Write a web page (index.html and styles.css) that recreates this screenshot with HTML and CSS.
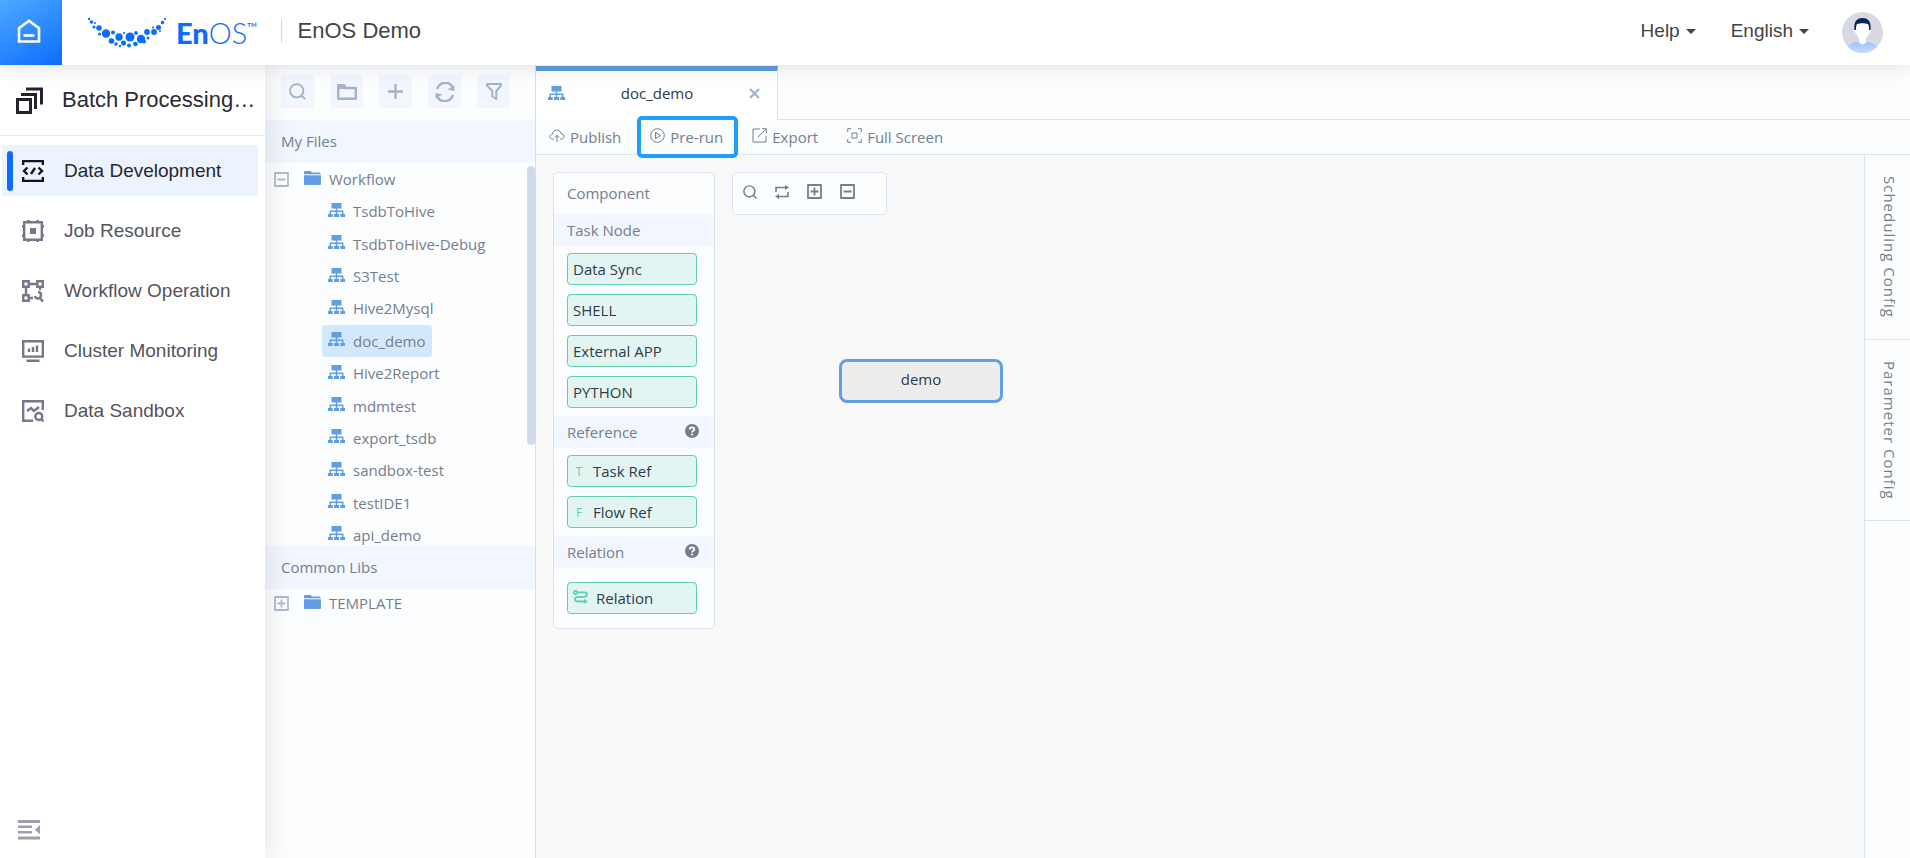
FILE: index.html
```
<!DOCTYPE html>
<html lang="en">
<head>
    <meta charset="UTF-8">
    <meta name="viewport" content="width=device-width, initial-scale=1.0">
    <title>EnOS Demo</title>
    <link rel="stylesheet" href="styles.css">
</head>
<body>
    <!-- shared icons -->
    <svg class="sprite" aria-hidden="true">
        <symbol id="flow" viewBox="0 0 17 14">
            <path fill="currentColor" d="M3.500 0h10v5.500h-10zM0 11h4.700v3H0zM6 11h5v3H6zM12.300 11H17v3h-4.700z"/>
            <path fill="none" stroke="currentColor" stroke-width="1.500" d="M8.500 5v6M2.300 11V8.200h12.400V11"/>
        </symbol>
        <symbol id="folder" viewBox="0 0 17 14">
            <path fill="currentColor" d="M0 1q0-1 1-1h5.500l1.500 1.500h7.500q1 0 1 1V3.300H0zM0 4.300h17V13q0 1-1 1H1q-1 0-1-1z"/>
        </symbol>
        <symbol id="search" viewBox="0 0 16 16">
            <g fill="none" stroke="currentColor" stroke-width="1.700"><circle cx="7.300" cy="7.300" r="6.300"/><path d="M11.700 11.700l3.600 3.600"/></g>
        </symbol>
        <symbol id="plusbox" viewBox="0 0 15 15">
            <path fill="none" stroke="currentColor" stroke-width="1.800" stroke-linejoin="round" d="M1 1h13v13H1zM3.500 7.500h8M7.500 3.500v8"/>
        </symbol>
        <symbol id="minusbox" viewBox="0 0 15 15">
            <path fill="none" stroke="currentColor" stroke-width="1.800" stroke-linejoin="round" d="M1 1h13v13H1zM3.500 7.500h8"/>
        </symbol>
        <symbol id="question" viewBox="0 0 14 14">
            <circle cx="7" cy="7" r="7" fill="currentColor"/>
            <path fill="none" stroke="#fff" stroke-width="1.700" d="M4.700 5.600c0-3 4.700-3 4.700-.3 0 1.500-2.300 1.500-2.300 3.200"/>
            <circle cx="7.100" cy="10.500" r="1" fill="#fff"/>
        </symbol>
    </svg>

    <header class="header">
        <a class="home" href="#" aria-label="Home">
            <svg width="24" height="24" viewBox="0 0 24 24" fill="none" stroke="#fff" stroke-width="2.600"><path d="M2 22.500V9.200L12 1.800l10 7.400v13.300z"/><path d="M6.500 16.500h11"/></svg>
        </a>
        <div class="logo">
            <svg width="78" height="31" viewBox="0 0 78 31" fill="#0b6cff">
                <circle cx="1" cy="2" r="1.200"/><circle cx="3.500" cy="5" r="1.800"/><circle cx="7" cy="6" r="1"/><circle cx="6" cy="10" r="1.500"/><circle cx="11" cy="11" r="2.800"/><circle cx="11.500" cy="17" r="1.500"/><circle cx="18" cy="16.500" r="4.200"/><circle cx="25" cy="15.500" r="2"/><circle cx="23.500" cy="24" r="2.800"/><circle cx="28" cy="27" r="1.800"/><circle cx="31" cy="20" r="3.700"/><circle cx="36" cy="16" r="1.100"/><circle cx="35.500" cy="26" r="2.500"/><circle cx="32" cy="29" r="1.200"/><circle cx="42" cy="20" r="4.500"/><circle cx="41" cy="28.500" r="2"/><circle cx="48" cy="16" r="1.900"/><circle cx="47.500" cy="27" r="2.300"/><circle cx="53" cy="22" r="4.200"/><circle cx="56" cy="24.500" r="2"/><circle cx="59" cy="15" r="2.900"/><circle cx="60" cy="21" r="1.500"/><circle cx="66" cy="15" r="2.900"/><circle cx="65" cy="10.500" r="1.100"/><circle cx="70.500" cy="10.500" r="2.500"/><circle cx="74.500" cy="5.500" r="1.800"/><circle cx="72" cy="14" r="1"/><circle cx="77" cy="2" r="1.100"/>
            </svg>
            <span class="logo-text"><b>En</b>OS<sup>TM</sup></span>
        </div>
        <h1 class="product">EnOS Demo</h1>
        <nav class="user-nav">
            <button class="menu-button" type="button">Help</button>
            <button class="menu-button" type="button">English</button>
            <a class="avatar" href="#" aria-label="Account">
                <svg width="41" height="41" viewBox="0 0 41 41">
                    <defs>
                        <clipPath id="round"><circle cx="20.500" cy="20.500" r="20.500"/></clipPath>
                        <linearGradient id="shirt" x2="0" y2="1"><stop stop-color="#9fc3ff"/><stop offset="1" stop-color="#c5dcff"/></linearGradient>
                    </defs>
                    <g clip-path="url(#round)">
                        <path fill="#d8d9e3" d="M0 0h41v41H0z"/>
                        <path fill="url(#shirt)" d="M4 41c0-7 5-11 12-11h9c7 0 12 4 12 11z"/>
                        <path fill="#fff" d="M13 11h15v6c2 0 1 4-1 4-1 3-2 4-3 5v4q-3.500 5-7 0v-4c-1-1-2-2-3-5-2 0-3-4-1-4z"/>
                        <path fill="#06235c" d="M12.500 18c-1-8 2-12 8-12s9 4 8 12h-1.500c0-3 0-4-1-6-3-1-8-1-11 0-1 2-1 3-1 6z"/>
                    </g>
                </svg>
            </a>
        </nav>
    </header>

    <div class="page">
        <aside class="sidebar">
            <h2 class="sidebar-title">
                <svg width="27" height="27" viewBox="0 0 27 27" fill="none" stroke="#23222f" stroke-width="3"><path d="M1.500 12.500h13v13h-13zM5 7.500h14.500V22M10 2h15.500v15.500"/></svg>
                Batch Processing…
            </h2>
            <nav class="side-nav">
                <a class="side-link active" href="#">
                    <svg width="22" height="22" viewBox="0 0 22 22" fill="none" stroke="currentColor" stroke-width="2.400"><path d="M1.100 5V1.100h19.800V5M1.100 17v3.900h19.800V17M5.500 7.500L2 11l3.500 3.500M16.500 7.500L20 11l-3.500 3.500M13 8l-4 6"/></svg>
                    Data Development
                </a>
                <a class="side-link" href="#">
                    <svg width="22" height="22" viewBox="0 0 22 22" fill="none" stroke="currentColor" stroke-width="2.400"><path d="M2.200 2.200h17.600v17.600H2.200zM6.500 0v2M15.500 0v2M6.500 20v2M15.500 20v2M0 6.500h2M0 15.500h2M20 6.500h2M20 15.500h2"/><path fill="currentColor" stroke="none" d="M8 8h6v6H8z"/></svg>
                    Job Resource
                </a>
                <a class="side-link" href="#">
                    <svg width="22" height="22" viewBox="0 0 22 22" fill="none" stroke="currentColor" stroke-width="2.400"><path d="M1.200 1.200h5.500v5.500H1.200zM15.300 1.200h5.500v5.500h-5.500zM1.200 15.300h5.500v5.500H1.200zM7 4h8M4 7v8M18 7v3M7 18h4"/><path d="M13 16c1 4 6 3 6-1 0-2-1-3-3-3M18 18l3 3.500"/></svg>
                    Workflow Operation
                </a>
                <a class="side-link" href="#">
                    <svg width="22" height="22" viewBox="0 0 22 22" fill="none" stroke="currentColor" stroke-width="2.400"><path d="M1.200 1.200h19.600v15.400H1.200zM4.500 20.700h13M7 12V8.500M11 12V7M15 12V5.500"/></svg>
                    Cluster Monitoring
                </a>
                <a class="side-link" href="#">
                    <svg width="22" height="22" viewBox="0 0 22 22" fill="none" stroke="currentColor" stroke-width="2.400"><path d="M20.800 10V1.200H1.200v19.600H11M5 11l4-3 3 3 5-4"/><circle cx="16.800" cy="16.500" r="3.500"/><path d="M19 19l2.500 2.500"/></svg>
                    Data Sandbox
                </a>
            </nav>
            <button class="collapse" type="button" aria-label="Collapse menu">
                <svg width="22" height="20" viewBox="0 0 22 20" fill="#a09eae"><path d="M0 0h22v3H0zM0 5.500h14v2.500H0zM0 11h14v2.500H0zM0 16.500h22v3H0zM22 5v9.500l-5-4.700z"/></svg>
            </button>
        </aside>

        <section class="files">
            <div class="file-tools">
                <button type="button" aria-label="Search"><svg width="17" height="17"><use href="#search"/></svg></button>
                <button type="button" aria-label="New folder"><svg width="20" height="16" viewBox="0 0 20 16"><path fill="none" stroke="currentColor" stroke-width="2.400" stroke-linejoin="round" d="M1.200 14.800V1.200H7l2 2.800h9.800v10.800z"/><path fill="currentColor" d="M1 1h6l2 4H1z"/></svg></button>
                <button type="button" aria-label="Add"><svg width="15" height="15" viewBox="0 0 15 15"><path stroke="currentColor" stroke-width="2.400" d="M7.500 0v15M0 7.500h15"/></svg></button>
                <button type="button" aria-label="Refresh"><svg width="20" height="20" viewBox="0 0 20 20"><path fill="none" stroke="currentColor" stroke-width="2.400" d="M2 7c3-8 13-8 16-1M18 13c-3 8-13 8-16 1"/><path fill="currentColor" d="M19.500 3.500V9l-7-1.500zM.5 16.500V11l7 1.500z"/></svg></button>
                <button type="button" aria-label="Filter"><svg width="16" height="17" viewBox="0 0 16 17"><path fill="none" stroke="currentColor" stroke-width="2" stroke-linejoin="round" d="M1 1h14v1.500L10.300 8v8l-4-2.500V8L1 2.500z"/></svg></button>
            </div>
            <h3 class="files-heading">My Files</h3>
            <div class="tree-wrap">
                <ul class="tree">
                    <li class="branch"><svg class="toggle" width="15" height="15"><use href="#minusbox"/></svg><a href="#"><svg width="17" height="14"><use href="#folder"/></svg>Workflow</a></li>
                    <li><a href="#"><svg width="17" height="14"><use href="#flow"/></svg>TsdbToHive</a></li>
                    <li><a href="#"><svg width="17" height="14"><use href="#flow"/></svg>TsdbToHive-Debug</a></li>
                    <li><a href="#"><svg width="17" height="14"><use href="#flow"/></svg>S3Test</a></li>
                    <li><a href="#"><svg width="17" height="14"><use href="#flow"/></svg>Hive2Mysql</a></li>
                    <li><a class="selected" href="#"><svg width="17" height="14"><use href="#flow"/></svg>doc_demo</a></li>
                    <li><a href="#"><svg width="17" height="14"><use href="#flow"/></svg>Hive2Report</a></li>
                    <li><a href="#"><svg width="17" height="14"><use href="#flow"/></svg>mdmtest</a></li>
                    <li><a href="#"><svg width="17" height="14"><use href="#flow"/></svg>export_tsdb</a></li>
                    <li><a href="#"><svg width="17" height="14"><use href="#flow"/></svg>sandbox-test</a></li>
                    <li><a href="#"><svg width="17" height="14"><use href="#flow"/></svg>testIDE1</a></li>
                    <li><a href="#"><svg width="17" height="14"><use href="#flow"/></svg>api_demo</a></li>
                </ul>
                <div class="scrollbar"><div class="thumb"></div></div>
            </div>
            <h3 class="files-heading">Common Libs</h3>
            <ul class="libs">
                <li class="branch"><svg class="toggle" width="15" height="15"><use href="#plusbox"/></svg><a href="#"><svg width="17" height="14"><use href="#folder"/></svg>TEMPLATE</a></li>
            </ul>
        </section>

        <main class="workspace">
            <div class="tabs">
                <div class="tab">
                    <svg width="17" height="14"><use href="#flow"/></svg>
                    <span class="tab-name">doc_demo</span>
                    <button class="tab-close" type="button" aria-label="Close tab"><svg width="11" height="11" viewBox="0 0 11 11"><path stroke="currentColor" stroke-width="2.200" d="M1 1l9 9M10 1l-9 9"/></svg></button>
                </div>
            </div>
            <div class="toolbar">
                <button type="button"><svg width="16" height="14" viewBox="0 0 16 14"><path d="M5 10H3.500C0 10 0 5.500 3.500 5 4 0 11 0 12 4.500c4 0 4 5.500.5 5.500H11M8 13V6.500M5.800 8.500L8 6.300l2.200 2.200"/></svg>Publish</button>
                <button class="highlight" type="button"><svg width="15" height="15" viewBox="0 0 15 15"><circle cx="7.500" cy="7.500" r="6.800"/><path d="M5.500 4.300v6.400l5-3.200z"/></svg>Pre-run</button>
                <button type="button"><svg width="15" height="15" viewBox="0 0 15 15"><path d="M8 1H1v13h13V8M10 .7h4.300V5M14 1L6 9"/></svg>Export</button>
                <button type="button"><svg width="15" height="15" viewBox="0 0 15 15"><path d="M4 .7H.7V4M11 .7h3.300V4M4 14.300H.7V11M11 14.300h3.300V11M5 5h5v5H5z"/></svg>Full Screen</button>
            </div>
            <div class="editor">
                <div class="canvas">
                    <div class="components">
                        <h4 class="components-title">Component</h4>
                        <h5>Task Node</h5>
                        <div class="group">
                            <button type="button">Data Sync</button>
                            <button type="button">SHELL</button>
                            <button type="button">External APP</button>
                            <button type="button">PYTHON</button>
                        </div>
                        <h5>Reference <svg width="14" height="14"><use href="#question"/></svg></h5>
                        <div class="group">
                            <button type="button"><span class="letter">T</span>Task Ref</button>
                            <button type="button"><span class="letter">F</span>Flow Ref</button>
                        </div>
                        <h5>Relation <svg width="14" height="14"><use href="#question"/></svg></h5>
                        <div class="group relation">
                            <button type="button"><svg width="15" height="14" viewBox="0 0 15 14" fill="none" stroke="currentColor" stroke-width="1.800"><circle cx="2.500" cy="2.500" r="1.700"/><path d="M4.500 2.300H11c4 0 4 4.500 0 4.500H5c-4 0-4 4.700 0 4.700h7"/><path fill="currentColor" stroke="none" d="M11 9l4 2.600-4 2.400z"/></svg>Relation</button>
                        </div>
                    </div>
                    <div class="canvas-tools">
                        <button type="button" aria-label="Find node"><svg width="14" height="14"><use href="#search"/></svg></button>
                        <button type="button" aria-label="Refresh"><svg width="14" height="14" viewBox="0 0 14 14"><path fill="none" stroke="currentColor" stroke-width="1.600" d="M1 7V2.500h10M13 7v4.500H3"/><path fill="currentColor" d="M10 0l4 2.500L10 5zM4 9l-4 2.500L4 14z"/></svg></button>
                        <button type="button" aria-label="Zoom in"><svg width="15" height="15"><use href="#plusbox"/></svg></button>
                        <button type="button" aria-label="Zoom out"><svg width="15" height="15"><use href="#minusbox"/></svg></button>
                    </div>
                    <div class="node">demo</div>
                </div>
                <div class="config">
                    <button type="button">Scheduling Config</button>
                    <button type="button">Parameter Config</button>
                </div>
            </div>
        </main>
    </div>
</body>
</html>
```
FILE: styles.css
```
* {
    box-sizing: border-box;
}

body {
    margin: 0;
    height: 100vh;
    display: flex;
    flex-direction: column;
    overflow: hidden;
    font-family: "Open Sans", "Noto Sans", sans-serif;
    font-size: 15px;
    color: #747f8d;
    background-color: #fcfdff;
}

h1, h2, h3, h4, h5, ul {
    margin: 0;
    padding: 0;
    font-weight: normal;
    list-style: none;
}

a {
    color: inherit;
    text-decoration: none;
}

button {
    margin: 0;
    padding: 0;
    border: none;
    background: none;
    font: inherit;
    color: inherit;
    cursor: pointer;
}

svg {
    display: block;
    flex-shrink: 0;
}

.sprite {
    position: absolute;
    width: 0;
    height: 0;
}

/* header */
.header {
    position: relative;
    z-index: 3;
    flex-shrink: 0;
    display: flex;
    align-items: center;
    height: 65px;
    background-color: #fff;
    box-shadow: 0 0 20px rgba(0, 0, 0, 0.14);
    font-family: "Liberation Sans", Arial, sans-serif;
    color: #444;
}

.home {
    width: 62px;
    height: 65px;
    display: flex;
    align-items: center;
    justify-content: center;
    padding-right: 5px;
    padding-bottom: 3px;
    background: linear-gradient(150deg, #4fa9ff, #0b6cff);
}

.logo {
    display: flex;
    align-items: center;
    gap: 10px;
    margin-left: 26px;
    color: #0b6cff;
}

.logo-text {
    display: flex;
    font-family: Lato, sans-serif;
    font-size: 29px;
    font-weight: 300;
    line-height: 36px;
}

.logo-text b {
    font-weight: 900;
}

.logo-text sup {
    font-size: 6px;
    font-weight: 700;
    line-height: 20px;
}

.product {
    margin-left: 24px;
    padding-left: 16px;
    border-left: 1px solid #d8d8d8;
    font-size: 22px;
    line-height: 24px;
}

.product, .menu-button {
    margin-bottom: 3px;
}

.user-nav {
    display: flex;
    align-items: center;
    gap: 35px;
    margin-left: auto;
    margin-right: 27px;
    font-size: 19px;
}

.menu-button {
    display: flex;
    align-items: center;
    gap: 6px;
}

.menu-button::after {
    content: "";
    border: 5px solid transparent;
    border-top-color: #444;
    border-bottom: none;
}

.avatar {
    margin-left: -2px;
}

/* left menu */
.page {
    flex: 1;
    display: flex;
    min-height: 0;
}

.sidebar {
    position: relative;
    z-index: 2;
    width: 265px;
    flex-shrink: 0;
    display: flex;
    flex-direction: column;
    background-color: #fff;
    box-shadow: 0 0 28px rgba(0, 0, 0, 0.12);
    font-family: "Liberation Sans", Arial, sans-serif;
}

.sidebar-title {
    display: flex;
    align-items: center;
    gap: 19px;
    height: 71px;
    padding-left: 16px;
    border-bottom: 1px solid #e8e8e8;
    font-size: 22px;
    color: #2b2a35;
    white-space: nowrap;
}

.side-nav {
    display: flex;
    flex-direction: column;
    gap: 9px;
    padding: 9px 7px 0 2px;
}

.side-link {
    display: flex;
    align-items: center;
    gap: 20px;
    height: 51px;
    padding-left: 20px;
    border-radius: 3px;
    font-size: 19px;
    color: #55545c;
}

.side-link svg {
    color: #77768a;
}

.side-link.active {
    background-color: #ebf3ff;
    color: #28272e;
}

.side-link.active svg {
    color: #15151a;
}

.side-link.active::before {
    content: "";
    width: 6px;
    height: 40px;
    margin: 0 -11px 0 -15px;
    border-radius: 3px;
    background-color: #0b6cff;
}

.collapse {
    margin: auto auto 18px 18px;
}

/* file tree */
.files {
    width: 271px;
    flex-shrink: 0;
    border-right: 1px solid #d5deeb;
}

.file-tools {
    display: flex;
    gap: 16px;
    padding: 10px 16px 12px;
}

.file-tools button {
    width: 33px;
    height: 33px;
    display: flex;
    align-items: center;
    justify-content: center;
    background-color: #f1f6ff;
    color: #a5b3c6;
}

.files-heading {
    padding-left: 16px;
    background-color: #f1f6ff;
    font-size: 15px;
    line-height: 43px;
}

.tree-wrap {
    display: flex;
    height: 383px;
    overflow: hidden;
}

.tree {
    flex: 1;
    display: flex;
    flex-direction: column;
    justify-content: space-between;
    height: 388px;
}

.tree li, .libs li {
    display: flex;
    align-items: center;
    padding-left: 57px;
}

.tree li.branch, .libs li.branch {
    gap: 9px;
    padding-left: 9px;
}

.tree a, .libs a {
    display: flex;
    align-items: center;
    gap: 8px;
    padding: 0 7px 0 6px;
    border-radius: 3px;
    line-height: 32px;
}

.libs a {
    line-height: 28px;
}

.tree a svg, .libs a svg {
    color: #619ee4;
    margin-bottom: 3px;
}

.toggle {
    color: #b0bccb;
}

.tree a.selected {
    background-color: #d2e9fd;
}

.scrollbar {
    width: 8px;
    padding-top: 3px;
    background-color: #fff;
}

.thumb {
    height: 279px;
    border-radius: 4px;
    background-color: #cfdbeb;
}

/* workspace */
.workspace {
    flex: 1;
    min-width: 0;
    display: flex;
    flex-direction: column;
}

.tabs {
    display: flex;
    height: 55px;
    padding-top: 1px;
    box-shadow: inset 0 -1px #d9e3f1;
}

.tab {
    display: flex;
    align-items: center;
    width: 242px;
    padding: 0 17px 5px 12px;
    border-top: 5px solid #5f9cdf;
    border-right: 1px solid #d9e3f1;
    background-color: #fff;
    color: #619ee4;
}

.tab-name {
    flex: 1;
    text-align: center;
    color: #303b4a;
}

.tab-close {
    color: #a5b3c6;
}

.toolbar {
    display: flex;
    align-items: center;
    gap: 29px;
    height: 35px;
    padding-left: 13px;
    border-bottom: 1px solid #d9e3f1;
}

.toolbar button {
    position: relative;
    z-index: 1;
    display: flex;
    align-items: center;
    gap: 5px;
}

.toolbar svg {
    fill: none;
    stroke: currentColor;
    stroke-width: 1;
    margin-bottom: 3px;
}

.toolbar .highlight::after {
    content: "";
    position: absolute;
    inset: -11px -15px -11px -13px;
    border: 4px solid #1e9fff;
    border-radius: 5px;
}

.editor {
    flex: 1;
    display: flex;
    min-height: 0;
}

.canvas {
    position: relative;
    flex: 1;
    display: flex;
    align-items: flex-start;
    gap: 17px;
    padding: 17px;
    background-color: #f9f9f9;
}

.components, .canvas-tools {
    border: 1px solid #d9e3f1;
    border-radius: 5px;
    background-color: #fcfdff;
}

.components {
    width: 162px;
}

.components-title {
    padding-left: 13px;
    font-size: 15px;
    line-height: 41px;
}

.components h5 {
    display: flex;
    align-items: center;
    justify-content: space-between;
    padding: 0 15px 0 13px;
    background-color: #f1f6ff;
    font-size: 15px;
    line-height: 32px;
}

.components h5 svg {
    margin-bottom: 3px;
}

.group {
    display: flex;
    flex-direction: column;
    gap: 9px;
    padding: 7px 17px 8px 13px;
}

.group.relation {
    padding-top: 14px;
    padding-bottom: 14px;
}

.group button {
    display: flex;
    align-items: center;
    gap: 8px;
    height: 32px;
    padding: 0 5px;
    border: 1px solid #5fcfae;
    border-radius: 4px;
    background-color: #e3f5f2;
    color: #303b4a;
}

.group svg, .letter {
    color: #5fcfae;
}

.group svg {
    margin-bottom: 3px;
}

.letter {
    width: 12px;
    text-align: center;
    font-size: 12px;
}

.canvas-tools {
    display: flex;
    gap: 18px;
    width: 155px;
    height: 43px;
    padding: 11px 10px;
}

.canvas-tools button {
    height: 15px;
}

.node {
    position: absolute;
    left: 303px;
    top: 204px;
    width: 164px;
    padding-bottom: 4px;
    border: 3px solid #619fe6;
    border-radius: 8px;
    background-color: #ededed;
    color: #303b4a;
    line-height: 34px;
    text-align: center;
}

.config {
    width: 46px;
    border-left: 1px solid #d9e3f1;
}

.config button {
    width: 100%;
    padding: 21px 0 21px 5px;
    border-bottom: 1px solid #d9e3f1;
    writing-mode: vertical-rl;
    letter-spacing: 1px;
}
```
